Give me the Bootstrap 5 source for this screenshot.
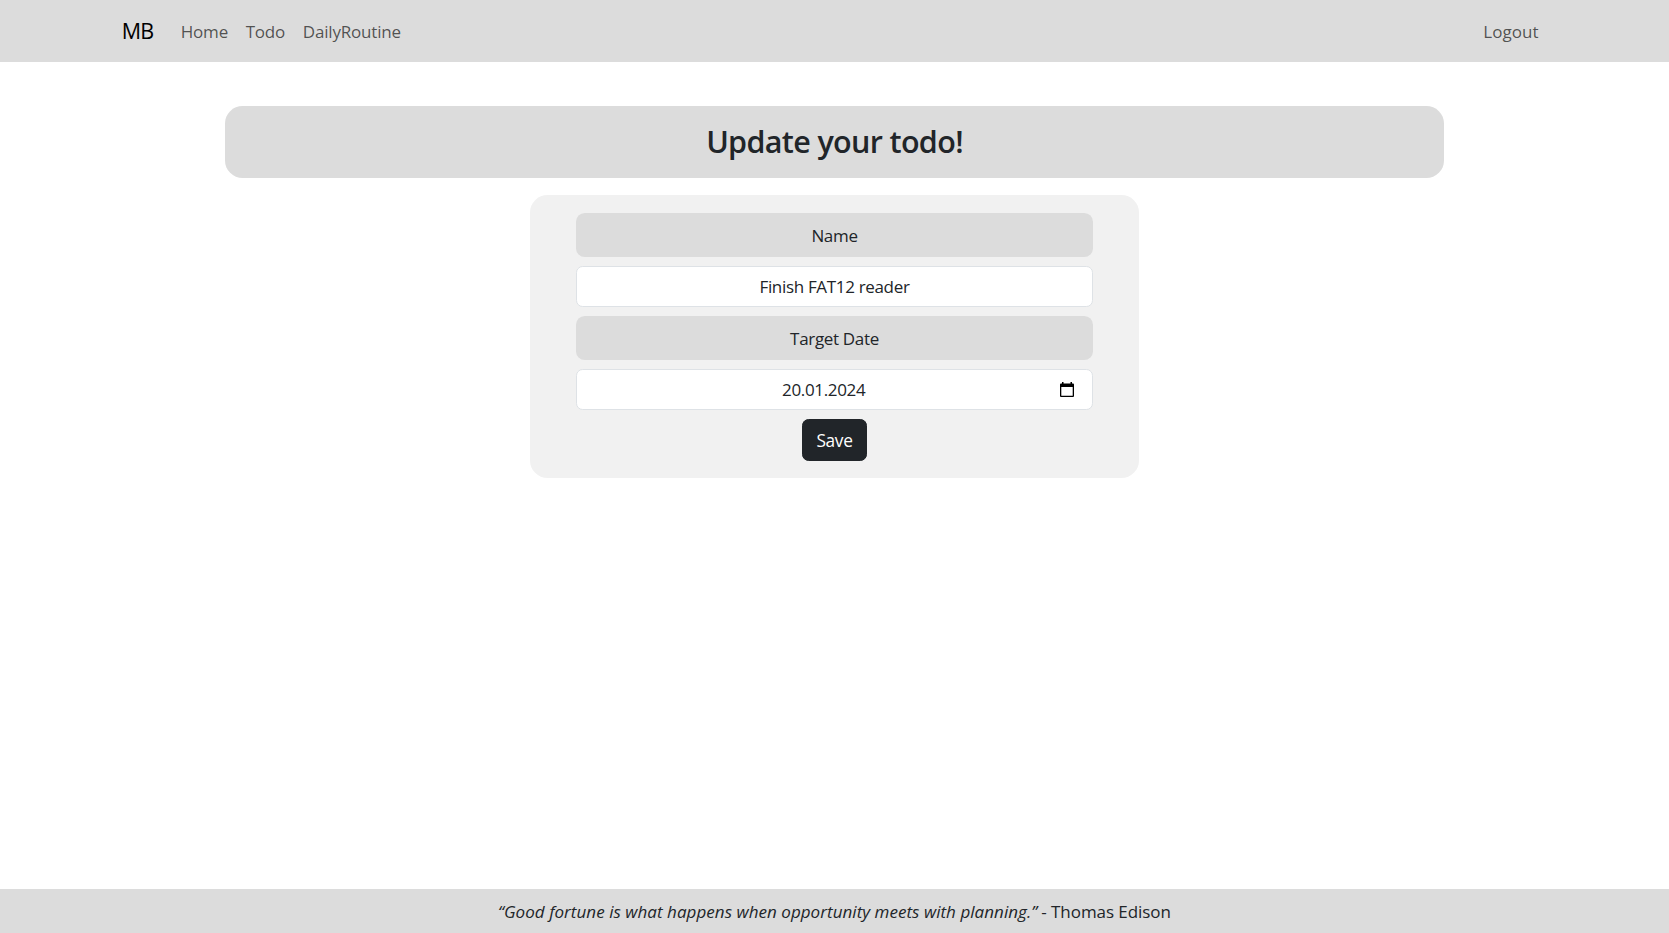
<!DOCTYPE html>
<html lang="en">
<head>
<meta charset="utf-8">
<meta name="viewport" content="width=device-width, initial-scale=1">
<title>Update todo</title>
<link href="https://cdn.jsdelivr.net/npm/bootstrap@5.3.0/dist/css/bootstrap.min.css" rel="stylesheet">
<style>
  html { font-size: 17.6px; }
  body { font-family: "Segoe UI", "Open Sans", sans-serif; font-size: 17px; line-height: 26.4px; letter-spacing: -.33px; }
  .bar { background: #dcdcdc; }
  .top-bar { height: 62px; }
  .top-bar .container { max-width: 1452px; padding: 0 13.2px; }
  .top-bar .navbar-brand { font-size: 21.5px; color: #000; margin-right: 18.6px; letter-spacing: -.8px; }
  .top-bar .nav-link { color: rgba(0,0,0,.65); padding: 10.3px 8.8px 8.3px; letter-spacing: -.18px; }
  .top-bar .nav-logout { letter-spacing: .02px; }
  .page { width: 1219px; margin-top: 44px; }
  .title-box { height: 72px; padding-bottom: 1px; border-radius: 17.6px; }
  .title-box h1 { font-size: 30.5px; font-weight: 600; letter-spacing: -.66px; }
  .form-box { width: 609px; height: 283px; margin-top: 17px; padding: 18px 46px 17px; gap: 9px; border-radius: 17.6px; background: #f1f1f1; }
  .field-label { height: 44px; padding-top: 2px; border-radius: 8.8px; }
  .field { height: 41px; border: 1px solid #dee2e6; border-radius: 6.6px; background: #fff; }
  .field input { min-width: 0; padding-top: 3px; color: #212529; letter-spacing: inherit; outline: 0; }
  .field .date-input { padding-left: 12px; }
  .save-btn { height: 42px; width: 65px; border-radius: 6.6px; padding: 2px 0 0; font-size: 17.300px; letter-spacing: -.3px; }
  .foot { height: 44px; padding-top: 3px; }
  .foot em { letter-spacing: .04px; }
  .foot .author { letter-spacing: -.06px; }
</style>
</head>
<body class="d-flex flex-column min-vh-100">
<nav class="navbar navbar-expand top-bar bar p-0">
  <div class="container">
    <a class="navbar-brand p-0" href="#">MB</a>
    <div class="navbar-nav flex-grow-1">
      <a class="nav-link" href="#">Home</a>
      <a class="nav-link" href="#">Todo</a>
      <a class="nav-link" href="#">DailyRoutine</a>
      <a class="nav-link nav-logout ms-auto" href="#">Logout</a>
    </div>
  </div>
</nav>
<main class="page mx-auto flex-grow-1">
  <div class="title-box bar d-flex align-items-center justify-content-center">
    <h1 class="m-0">Update your todo!</h1>
  </div>
  <form class="form-box mx-auto d-flex flex-column">
    <label class="field-label bar d-flex align-items-center justify-content-center" for="name">Name</label>
    <div class="field d-flex"><input class="border-0 bg-transparent w-100 text-center" id="name" type="text" value="Finish FAT12 reader"></div>
    <label class="field-label bar d-flex align-items-center justify-content-center" for="date">Target Date</label>
    <div class="field d-flex align-items-center pe-3">
      <input class="date-input border-0 bg-transparent flex-grow-1 text-center" id="date" type="text" value="20.01.2024">
      <svg width="14" height="15" viewBox="0 0 14 15" aria-hidden="true"><path d="M2 0h1.500v1.500h7V0H12v1.500h1q1 0 1 1V14q0 1-1 1H1q-1 0-1-1V2.500q0-1 1-1h1zM1.300 5v8.700h11.400V5z" fill="#000" fill-rule="evenodd"/></svg>
    </div>
    <button class="btn btn-dark save-btn mx-auto" type="button">Save</button>
  </form>
</main>
<footer class="foot bar d-flex align-items-center justify-content-center">
  <div><em>“Good fortune is what happens when opportunity meets with planning.”</em> <span class="author">- Thomas Edison</span></div>
</footer>
<script src="https://cdn.jsdelivr.net/npm/bootstrap@5.3.0/dist/js/bootstrap.bundle.min.js"></script>
</body>
</html>
